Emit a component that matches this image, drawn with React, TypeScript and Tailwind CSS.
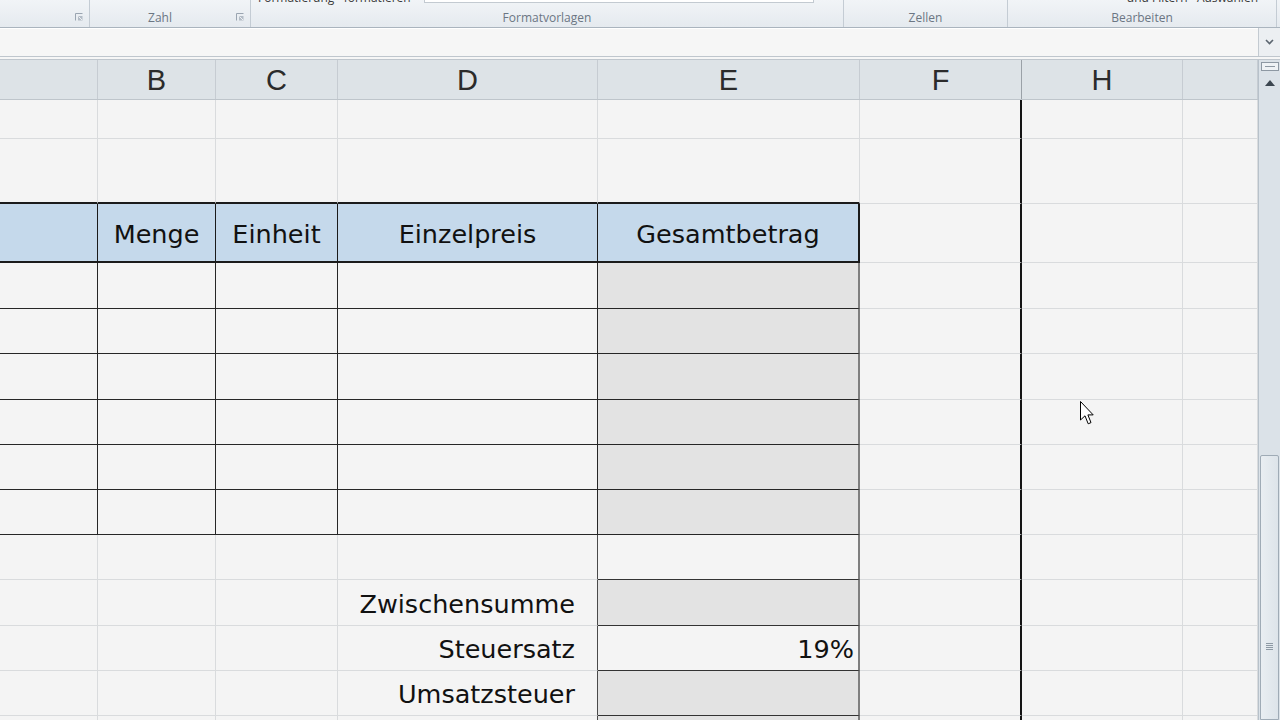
import React from 'react';

const sheetFont = { fontFamily: '"DejaVu Sans", Verdana, sans-serif' };
const uiFont = { fontFamily: '"Open Sans", "Noto Sans", sans-serif' };

const W = ['w-[98px]', 'w-[118px]', 'w-[122px]', 'w-[260px]', 'w-[262px]', 'w-[162px]', 'w-[161px]', 'w-[75px]'];

const GRID = 'border-r border-b border-[#d9dbdd]';
const FCOL = 'border-r-2 border-r-[#141414] border-b border-b-[#d9dbdd]';

const Launcher = () => (
  <svg width="8" height="8" viewBox="0 0 8 8" className="shrink-0">
    <path d="M0.5 7.5V0.5H7.5" fill="none" stroke="#9aa5b1" strokeWidth="1" />
    <rect x="3" y="3" width="4.5" height="4.5" fill="#b3bcc6" />
    <path d="M3.5 3.5L7 7" stroke="#eef1f4" strokeWidth="1" />
  </svg>
);

type Group = { w: string; label: string; launcher?: boolean; top?: React.ReactNode };

const groups: Group[] = [
  { w: 'w-[90px]', label: '', launcher: true },
  { w: 'w-[161px]', label: 'Zahl', launcher: true },
  {
    w: 'w-[593px]',
    label: 'Formatvorlagen',
    top: (
      <div className="flex items-start pl-[7px]">
        <span className="-mt-[9px] text-[12px] leading-[14px] text-[#3b3b3b] whitespace-nowrap">Formatierung · formatieren</span>
        <div className="ml-[13px] w-[390px] h-[3px] border-b border-x border-[#c3cad1] bg-white" />
      </div>
    ),
  },
  { w: 'w-[164px]', label: 'Zellen' },
  {
    w: 'w-[269px]',
    label: 'Bearbeiten',
    top: (
      <div className="flex justify-end pr-[18px]">
        <span className="-mt-[9px] text-[12px] leading-[14px] text-[#3b3b3b] whitespace-nowrap">und Filtern · Auswählen</span>
      </div>
    ),
  },
];

const Ribbon = () => (
  <div className="flex h-[28px] shrink-0 bg-gradient-to-b from-[#f1f4f7] to-[#e5eaef] border-b border-b-[#aab4be]" style={uiFont}>
    {groups.map((g, i) => (
      <div key={i} className={`${g.w} shrink-0 flex flex-col border-r border-r-[#c4ccd4]`}>
        <div className="h-[8px] overflow-hidden">{g.top}</div>
        <div className={`flex-1 flex items-center relative ${g.launcher ? 'pr-[20px]' : ''}`}>
          <span className="flex-1 text-center text-[12px] leading-none text-[#6b7683]">{g.label}</span>
          {g.launcher && (
            <div className="absolute right-[6px] top-[5px]">
              <Launcher />
            </div>
          )}
        </div>
      </div>
    ))}
    <div className="flex-1" />
  </div>
);

const FormulaBar = () => (
  <div className="flex h-[32px] shrink-0 bg-[#f6f6f6] border-b-[4px] border-double border-b-[#bfc6cd]">
    <div className="flex-1 border-t border-t-white" />
    <div className="w-[22px] border-l border-l-[#c3cad1] bg-[#eceff2] flex items-center justify-center">
      <svg width="9" height="6" viewBox="0 0 9 6">
        <path d="M1 1L4.5 4.5L8 1" fill="none" stroke="#5c6670" strokeWidth="1.6" />
      </svg>
    </div>
  </div>
);

const letters = ['', 'B', 'C', 'D', 'E', 'F', 'H', ''];

const ColumnHeader = () => (
  <div className="flex h-[40px] shrink-0 bg-[#dde3e7] border-b border-b-[#bec5cb]" style={{ fontFamily: '"Liberation Sans", Arial, sans-serif' }}>
    {letters.map((l, i) => (
      <div key={i} className={`${W[i]} shrink-0 flex items-center justify-center pt-[3px] border-r ${i === 5 ? 'border-r-[#9aa1a7]' : 'border-r-[#c6ccd2]'} text-[29px] text-[#2b2b2b]`}>
        {l}
      </div>
    ))}
  </div>
);

type Cell = { cls?: string; text?: string; align?: 'center' | 'right' };
type Row = { h: string; cells: Cell[] };

const TH = 'bg-[#c5d9eb] border-r border-r-[#1b1b1b] border-b-2 border-b-[#1b1b1b]';
const TD = 'border-r border-b border-[#262626]';
const TE = 'bg-[#e3e3e3] border-r-2 border-r-[#7f7f7f] border-b border-b-[#262626]';
const D_EDGE = 'border-r border-r-[#4a4a4a] border-b border-b-[#d9dbdd]';
const E_GRAY = 'bg-[#e3e3e3] border-r-2 border-r-[#7f7f7f] border-b border-b-[#333]';
const E_WHITE = 'border-r-2 border-r-[#7f7f7f] border-b border-b-[#333]';

const plain = (h: string): Row => ({ h, cells: [{}, {}, {}, {}, {}, { cls: FCOL }, {}, {}] });

const bodyRow = (h: string): Row => ({
  h,
  cells: [{ cls: TD }, { cls: TD }, { cls: TD }, { cls: TD }, { cls: TE }, { cls: FCOL }, {}, {}],
});

const sumRow = (h: string, label: string, e: string, value?: string): Row => ({
  h,
  cells: [{}, {}, {}, { cls: D_EDGE, text: label, align: 'right' }, { cls: e, text: value, align: 'right' }, { cls: FCOL }, {}, {}],
});

const TOPB = 'border-r border-r-[#d9dbdd] border-b-2 border-b-[#1b1b1b]';

const rows: Row[] = [
  plain('h-[39px]'),
  { h: 'h-[65px]', cells: [{ cls: TOPB }, { cls: TOPB }, { cls: TOPB }, { cls: TOPB }, { cls: TOPB }, { cls: FCOL }, {}, {}] },
  {
    h: 'h-[59px]',
    cells: [
      { cls: TH },
      { cls: TH, text: 'Menge', align: 'center' },
      { cls: TH, text: 'Einheit', align: 'center' },
      { cls: TH, text: 'Einzelpreis', align: 'center' },
      { cls: 'bg-[#c5d9eb] border-r-2 border-r-[#1b1b1b] border-b-2 border-b-[#1b1b1b]', text: 'Gesamtbetrag', align: 'center' },
      { cls: FCOL },
      {},
      {},
    ],
  },
  bodyRow('h-[46px]'),
  bodyRow('h-[45px]'),
  bodyRow('h-[46px]'),
  bodyRow('h-[45px]'),
  bodyRow('h-[45px]'),
  bodyRow('h-[45px]'),
  sumRow('h-[45px]', '', E_WHITE),
  sumRow('h-[46px]', 'Zwischensumme', E_GRAY),
  sumRow('h-[45px]', 'Steuersatz', E_WHITE, '19%'),
  sumRow('h-[45px]', 'Umsatzsteuer', E_GRAY),
  sumRow('h-[45px]', '', E_GRAY),
];

const Sheet = () => (
  <div className="flex-1 flex flex-col overflow-hidden bg-[#f4f4f4]" style={sheetFont}>
    <ColumnHeader />
    {rows.map((r, ri) => (
      <div key={ri} className={`flex shrink-0 ${r.h}`}>
        {r.cells.map((c, ci) => (
          <div
            key={ci}
            className={`${W[ci]} shrink-0 h-full flex items-center pt-[3px] ${c.align === 'right' ? 'justify-end pr-[4px]' : 'justify-center'} ${c.cls ?? GRID} text-[25.5px] text-[#111] whitespace-nowrap`}
          >
            {c.text && <span className={ci === 3 && c.align === 'right' ? 'pr-[18px]' : ''}>{c.text}</span>}
          </div>
        ))}
      </div>
    ))}
  </div>
);

const Scrollbar = () => (
  <div className="w-[22px] shrink-0 flex flex-col bg-[#dbe2e8] border-l border-l-[#b7c1ca]">
    <div className="h-[46px] shrink-0 flex flex-col items-center pt-[2px]">
      <div className="w-[18px] h-[9px] border border-[#8d98a3] bg-[#eef2f5] flex items-center justify-center">
        <div className="w-[10px] h-[1px] bg-[#8d98a3]" />
      </div>
      <svg width="10" height="6" viewBox="0 0 10 6" className="mt-[9px]">
        <path d="M0 6L5 0L10 6Z" fill="#3c4650" />
      </svg>
    </div>
    <div className="h-[349px] shrink-0" />
    <div className="flex-1 mx-[1px] border border-[#9fabb6] rounded-t-[2px] bg-gradient-to-r from-[#e9eef2] to-[#dde4ea] flex flex-col items-center pt-[187px]">
      <div className="flex flex-col gap-[1px]">
        <div className="w-[7px] h-[1px] bg-[#8e9aa5]" />
        <div className="w-[7px] h-[1px] bg-[#8e9aa5]" />
        <div className="w-[7px] h-[1px] bg-[#8e9aa5]" />
        <div className="w-[7px] h-[1px] bg-[#8e9aa5]" />
      </div>
    </div>
  </div>
);

const Pointer = () => (
  <svg width="14" height="25" viewBox="0 0 14 25" className="absolute left-[1080px] top-[401px]">
    <path d="M0.5 0.5V19L5 14.8L8.2 22.8L11 21.6L7.9 13.9H13.2Z" fill="#ffffff" stroke="#000000" strokeWidth="1" strokeLinejoin="miter" />
  </svg>
);

export default function App() {
  return (
    <div className="relative w-[1280px] h-[720px] overflow-hidden flex flex-col bg-[#f4f4f4]">
      <Ribbon />
      <FormulaBar />
      <div className="flex-1 flex min-h-0">
        <Sheet />
        <Scrollbar />
      </div>
      <Pointer />
    </div>
  );
}
